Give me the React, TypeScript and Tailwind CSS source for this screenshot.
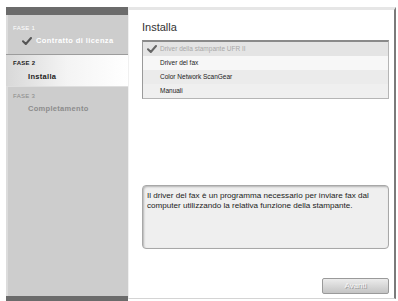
import React from 'react';

function Check({ color }: { color: string }) {
  return (
    <svg width="10" height="8" viewBox="0 0 10 8">
      <path d="M1 4.2 L3.8 7 L9 1" fill="none" stroke={color} strokeWidth="2" strokeLinecap="round" strokeLinejoin="round" />
    </svg>
  );
}

const items = [
  { label: 'Driver della stampante UFR II', done: true, bg: 'bg-[#e4e4e4]' },
  { label: 'Driver del fax', done: false, bg: 'bg-[#f7f7f7]' },
  { label: 'Color Network ScanGear', done: false, bg: 'bg-[#ebebeb]' },
  { label: 'Manuali', done: false, bg: 'bg-[#efefef]' },
];

export default function App() {
  return (
    <div
      className="w-[398px] h-[301px] bg-white flex pt-[7px] pl-[6px] overflow-hidden"
      style={{ fontFamily: '"Liberation Sans", Arial, sans-serif' }}
    >
      {/* sidebar */}
      <div className="w-[122px] flex flex-col bg-[#cdcdcd] border-l-2 border-[#dcdcdc]">
        <div className="h-[8px] bg-[#6b6b6b] -ml-[2px]" />
        <div className="h-[39px] pl-[5px] pt-[10px]">
          <div className="text-[6px] leading-[6px] text-white tracking-[0.3px]">FASE 1</div>
          <div className="flex items-center mt-[4px] pl-[9px] gap-[4px]">
            <Check color="#555555" />
            <span className="text-[7.5px] font-bold text-white tracking-[0.4px]">Contratto di licenza</span>
          </div>
        </div>
        <div className="h-[33px] -ml-[2px] pl-[7px] pt-[5px] border-t border-[#9c9c9c] border-b border-b-[#dedede] bg-gradient-to-r from-[#d8d8d8] via-[#f4f4f4] to-white">
          <div className="text-[6px] leading-[6px] text-[#222] font-bold tracking-[0.3px]">FASE 2</div>
          <div className="text-[7.5px] font-bold text-[#222] mt-[5px] pl-[15px] tracking-[0.3px]">Installa</div>
        </div>
        <div className="flex-1 pl-[5px] pt-[6px]">
          <div className="text-[6px] leading-[6px] text-[#8a8a8a] tracking-[0.3px]">FASE 3</div>
          <div className="text-[7.5px] font-bold text-[#8c8c8c] mt-[4px] pl-[15px] tracking-[0.3px]">Completamento</div>
        </div>
        <div className="h-[5px] bg-[#6b6b6b] -ml-[2px]" />
      </div>

      {/* main panel */}
      <div className="w-[268px] flex flex-col border-t-[3px] border-[#e6e6e6] border-l border-l-[#f0f0f0] border-r-2 border-r-[#7a7a7a] border-b border-b-[#d4d4d4] mb-[2px]">
        <div className="flex-1 flex flex-col pl-[13px] pr-[5px] pt-[11px]">
          <div className="text-[11px] leading-[13px] text-[#333]">Installa</div>
          <div className="mt-[6px] border border-[#b5b5b5] border-t-2 border-t-[#8a8a8a] border-l-[#9a9a9a] bg-white">
            {items.map((it) => (
              <div key={it.label} className={`h-[14px] flex items-center ${it.bg}`}>
                <div className="w-[17px] flex justify-center">
                  {it.done && <Check color="#666666" />}
                </div>
                <span className={`text-[6.5px] ${it.done ? 'text-[#a8a8a8]' : 'text-[#222]'}`}>{it.label}</span>
              </div>
            ))}
          </div>
          <div className="mt-[86px] h-[64px] rounded-[4px] border border-[#a8a8a8] bg-[#efefef] shadow-[inset_1px_1px_2px_rgba(0,0,0,0.25)] px-[4px] pt-[5px]">
            <p className="text-[8.1px] leading-[10px] text-[#222]">
              Il driver del fax è un programma necessario per inviare fax dal computer utilizzando la relativa funzione della stampante.
            </p>
          </div>
          <div className="flex-1" />
          <div className="flex justify-end mb-[4px]">
            <div className="w-[67px] h-[16px] rounded-[2px] border border-[#9a9a9a] bg-gradient-to-b from-[#ececec] to-[#c4c4c4] flex items-center justify-center text-[8px] text-[#f4f4f4] [text-shadow:1px_1px_0_#9a9a9a]">
              Avanti
            </div>
          </div>
        </div>
      </div>
    </div>
  );
}
